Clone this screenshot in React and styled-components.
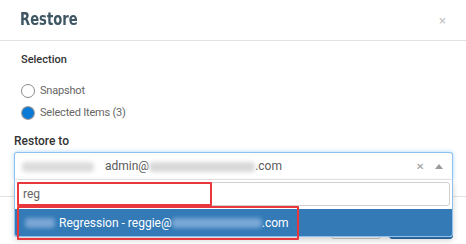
import React from "react";
import styled, { createGlobalStyle } from "styled-components";

const GlobalStyle = createGlobalStyle`
  body {
    margin: 0;
    background: #ffffff;
    font-family: Roboto, "Liberation Sans", sans-serif;
  }
`;

const Modal = styled.div`
  position: relative;
  width: 466px;
  height: 244px;
  overflow: hidden;
  background: #ffffff;
`;

const Header = styled.div`
  display: flex;
  align-items: center;
  justify-content: space-between;
  height: 40px;
  padding: 0 20px;
  border-bottom: 1px solid #e2e2e2;
  .modal-title {
    font-family: "Liberation Sans Narrow", "DejaVu Sans Condensed", sans-serif;
    font-weight: bold;
    font-size: 17px;
    color: #3f5663;
    transform: scaleX(0.86);
    transform-origin: left center;
    margin-top: -2px;
  }
  .modal-close {
    font-size: 13px;
    color: #c4c4c4;
  }
`;

const Body = styled.div`
  padding: 12px 13px 16px 14px;
  border-bottom: 1px solid #e2e2e2;
`;

const Section = styled.div`
  padding-left: 7px;
  margin-bottom: 14px;
`;

const Label = styled.div`
  font-size: ${(p) => p.size || 11}px;
  font-weight: 500;
  color: #333333;
  line-height: 14px;
`;

const RadioList = styled.div`
  display: flex;
  flex-direction: column;
  gap: 8px;
  margin-top: 17px;
`;

const RadioRow = styled.label`
  display: flex;
  align-items: center;
  gap: 5px;
  font-size: 11px;
  letter-spacing: -0.2px;
  color: #666666;
  line-height: 14px;
`;

const RadioDot = styled.span`
  box-sizing: border-box;
  width: 14px;
  height: 14px;
  border-radius: 50%;
  border: ${(p) => (p.checked ? "none" : "1px solid #8a8a8a")};
  background: ${(p) =>
    p.checked ? "radial-gradient(circle, #0a7ad6 55%, #9b9b9b 62%)" : "#fff"};
`;

const SelectWrap = styled.div`
  position: relative;
  margin-top: 4px;
  z-index: 2;
`;

const Control = styled.div`
  display: flex;
  align-items: center;
  height: 26px;
  padding: 0 9px 0 7px;
  border: 1px solid #8fc1ef;
  border-bottom-color: #e6e6e6;
  border-radius: 3px 3px 0 0;
  box-shadow: 0 0 4px rgba(102, 175, 233, 0.55);
  font-size: 12px;
  color: #5a5a5a;
  .value {
    flex: 1;
    white-space: nowrap;
  }
  .clear {
    font-size: 10px;
    color: #999;
    margin-right: 11px;
  }
`;

const Blur = styled.span`
  display: inline-block;
  width: ${(p) => p.w}px;
  height: 10px;
  vertical-align: middle;
  border-radius: 4px;
  background: ${(p) => p.bg};
  filter: blur(2px);
  margin-right: ${(p) => p.mr || 0}px;
`;

const Dropdown = styled.div`
  position: absolute;
  top: 100%;
  left: 0;
  right: 0;
  background: #ffffff;
  border: 1px solid #8fc1ef;
  border-top: none;
  border-radius: 0 0 3px 3px;
  box-shadow: 0 3px 6px rgba(0, 0, 0, 0.18);
  overflow: hidden;
`;

const Search = styled.div`
  box-sizing: border-box;
  margin: 2px 2px 3px 2px;
  height: 24px;
  border: 1px solid #d0d0d0;
  border-radius: 3px;
  padding: 0 5px;
  display: flex;
  align-items: center;
  font-size: 12px;
  color: #666;
`;

const Option = styled.div`
  height: 27px;
  display: flex;
  align-items: center;
  padding: 0 10px;
  background: #337ab7;
  color: #ffffff;
  font-size: 12px;
  white-space: nowrap;
`;

const Footer = styled.div`
  display: flex;
  justify-content: flex-end;
  gap: 8px;
  padding: 12px 13px 0 0;
`;

const Button = styled.div`
  box-sizing: border-box;
  width: ${(p) => p.w}px;
  height: 30px;
  border-radius: 3px;
  background: ${(p) => (p.primary ? "#337ab7" : "#fff")};
  border: 1px solid ${(p) => (p.primary ? "#2e6da4" : "#cccccc")};
`;

const Highlight = styled.div`
  position: absolute;
  box-sizing: border-box;
  border: 2px solid #e8383d;
  border-radius: 1px;
  z-index: 5;
`;

export default function App() {
  return (
    <>
      <GlobalStyle />
      <Modal>
        <Header>
          <span className="modal-title">Restore</span>
          <span className="modal-close">×</span>
        </Header>
        <Body>
          <Section>
            <Label>Selection</Label>
            <RadioList>
              <RadioRow>
                <RadioDot />
                Snapshot
              </RadioRow>
              <RadioRow>
                <RadioDot checked />
                Selected Items (3)
              </RadioRow>
            </RadioList>
          </Section>
          <Label size={12}>Restore to</Label>
          <SelectWrap>
            <Control>
              <span className="value">
                <Blur w={72} bg="#dcdcdc" mr={11} />
                admin@
                <Blur w={106} bg="#d8d8d8" />
                .com
              </span>
              <span className="clear">✕</span>
              <svg width="8" height="5" viewBox="0 0 8 5">
                <path d="M0 5 L4 0 L8 5 Z" fill="#9a9a9a" />
              </svg>
            </Control>
            <Dropdown>
              <Search>reg</Search>
              <Option>
                <Blur w={30} bg="#7aa6d4" mr={4} />
                Regression - reggie@
                <Blur w={90} bg="#7aa8d6" />
                .com
              </Option>
            </Dropdown>
          </SelectWrap>
        </Body>
        <Footer>
          <Button w={50} />
          <Button w={64} primary />
        </Footer>
        <Highlight style={{ left: 17, top: 182, width: 195, height: 24 }} />
        <Highlight style={{ left: 17, top: 206, width: 282, height: 34 }} />
      </Modal>
    </>
  );
}
